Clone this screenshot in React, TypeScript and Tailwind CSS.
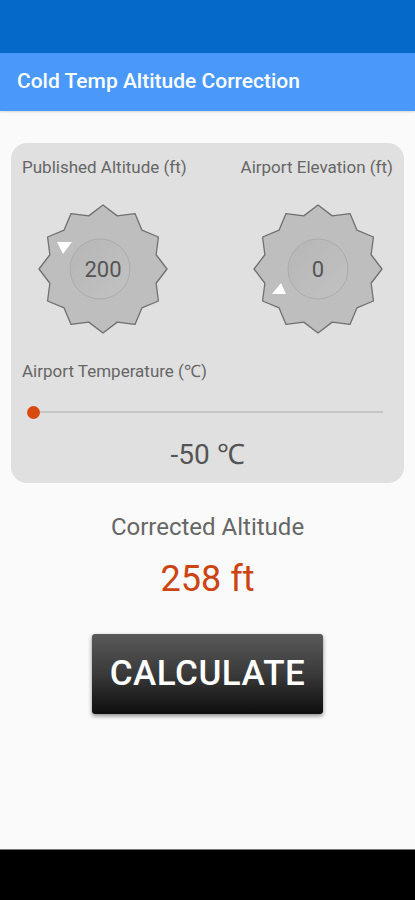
import React from 'react';

function starPoints(cx: number, cy: number, outer: number, inner: number, n: number) {
  const pts: string[] = [];
  for (let i = 0; i < n * 2; i++) {
    const r = i % 2 === 0 ? outer : inner;
    const a = (Math.PI * i) / n - Math.PI / 2;
    pts.push(`${(cx + r * Math.cos(a)).toFixed(2)},${(cy + r * Math.sin(a)).toFixed(2)}`);
  }
  return pts.join(' ');
}

function Knob({ value, marker }: { value: string; marker: 'down' | 'up' }) {
  const wellX = marker === 'down' ? 63 : 66;
  return (
    <div className="relative w-[132px] h-[132px]">
      <svg width="132" height="132" viewBox="0 0 132 132" className="absolute inset-0">
        <defs>
          <linearGradient id={`well-${marker}`} x1="0" y1="0" x2="1" y2="1">
            <stop offset="0%" stopColor="#b6b6b6" />
            <stop offset="100%" stopColor="#c2c2c2" />
          </linearGradient>
        </defs>
        <polygon
          points={starPoints(66, 66, 64, 55, 12)}
          fill="#bebebe"
          stroke="#707070"
          strokeWidth="1.3"
          strokeLinejoin="round"
        />
        <circle cx={wellX} cy="66" r="30" fill={`url(#well-${marker})`} stroke="#ababab" strokeWidth="1" />
        {marker === 'down' ? (
          <polygon points="20,39 35,39 26,51" fill="#ffffff" />
        ) : (
          <polygon points="20,91 34,91 29,80" fill="#ffffff" />
        )}
      </svg>
      <div className="absolute inset-0 flex items-center justify-center text-[22px] text-[#555] font-['Roboto',sans-serif]">
        {value}
      </div>
    </div>
  );
}

export default function App() {
  return (
    <div className="w-[415px] h-[900px] flex flex-col bg-[#fafafa] font-['Roboto',sans-serif]">
      {/* status bar */}
      <div className="h-[53px] bg-[#0569c9] shrink-0" />

      {/* app bar */}
      <div className="h-[58px] bg-[#4a99fa] shrink-0 flex items-center px-[17px] shadow-[0_1px_2px_rgba(0,0,0,0.15)]">
        <h1 className="text-white text-[21px] font-medium">Cold Temp Altitude Correction</h1>
      </div>

      <div className="flex-1 flex flex-col items-center">
        {/* inputs card */}
        <div className="mt-[32px] w-[393px] rounded-[16px] bg-[#e0e0e0] pt-[14px] pb-[11px] px-[11px]">
          <div className="flex justify-between text-[17px] text-[#666] leading-[20px]">
            <span>Published Altitude (ft)</span>
            <span>Airport Elevation (ft)</span>
          </div>
          <div className="flex justify-between mt-[26px] pl-[15px] pr-[9px]">
            <Knob value="200" marker="down" />
            <Knob value="0" marker="up" />
          </div>
          <div className="mt-[26px] text-[17px] text-[#666] leading-[20px]">Airport Temperature (℃)</div>
          <div className="relative mt-[24px] h-[14px] flex items-center">
            <div className="ml-[18px] mr-[10px] flex-1 h-[2px] bg-[#c6c6c6]" />
            <div className="absolute left-[5px] top-[1px] w-[13px] h-[13px] rounded-full bg-[#d84b0f]" />
          </div>
          <div className="mt-[19px] text-center text-[28px] text-[#555] leading-[34px]">-50 ℃</div>
        </div>

        <div className="mt-[29px] text-[24px] text-[#666] leading-[30px]">Corrected Altitude</div>
        <div className="mt-[16px] text-[36px] text-[#cc4411] leading-[42px]">258 ft</div>

        <button className="mt-[34px] w-[231px] h-[80px] rounded-[3px] bg-gradient-to-b from-[#5a5a5a] via-[#3a3a3a] to-[#0e0e0e] text-white text-[35px] font-medium tracking-[0.5px] shadow-[0_2px_4px_rgba(0,0,0,0.45)]">
          CALCULATE
        </button>
      </div>

      {/* nav bar */}
      <div className="h-[51px] bg-black border-t border-[#777] shrink-0" />
    </div>
  );
}
